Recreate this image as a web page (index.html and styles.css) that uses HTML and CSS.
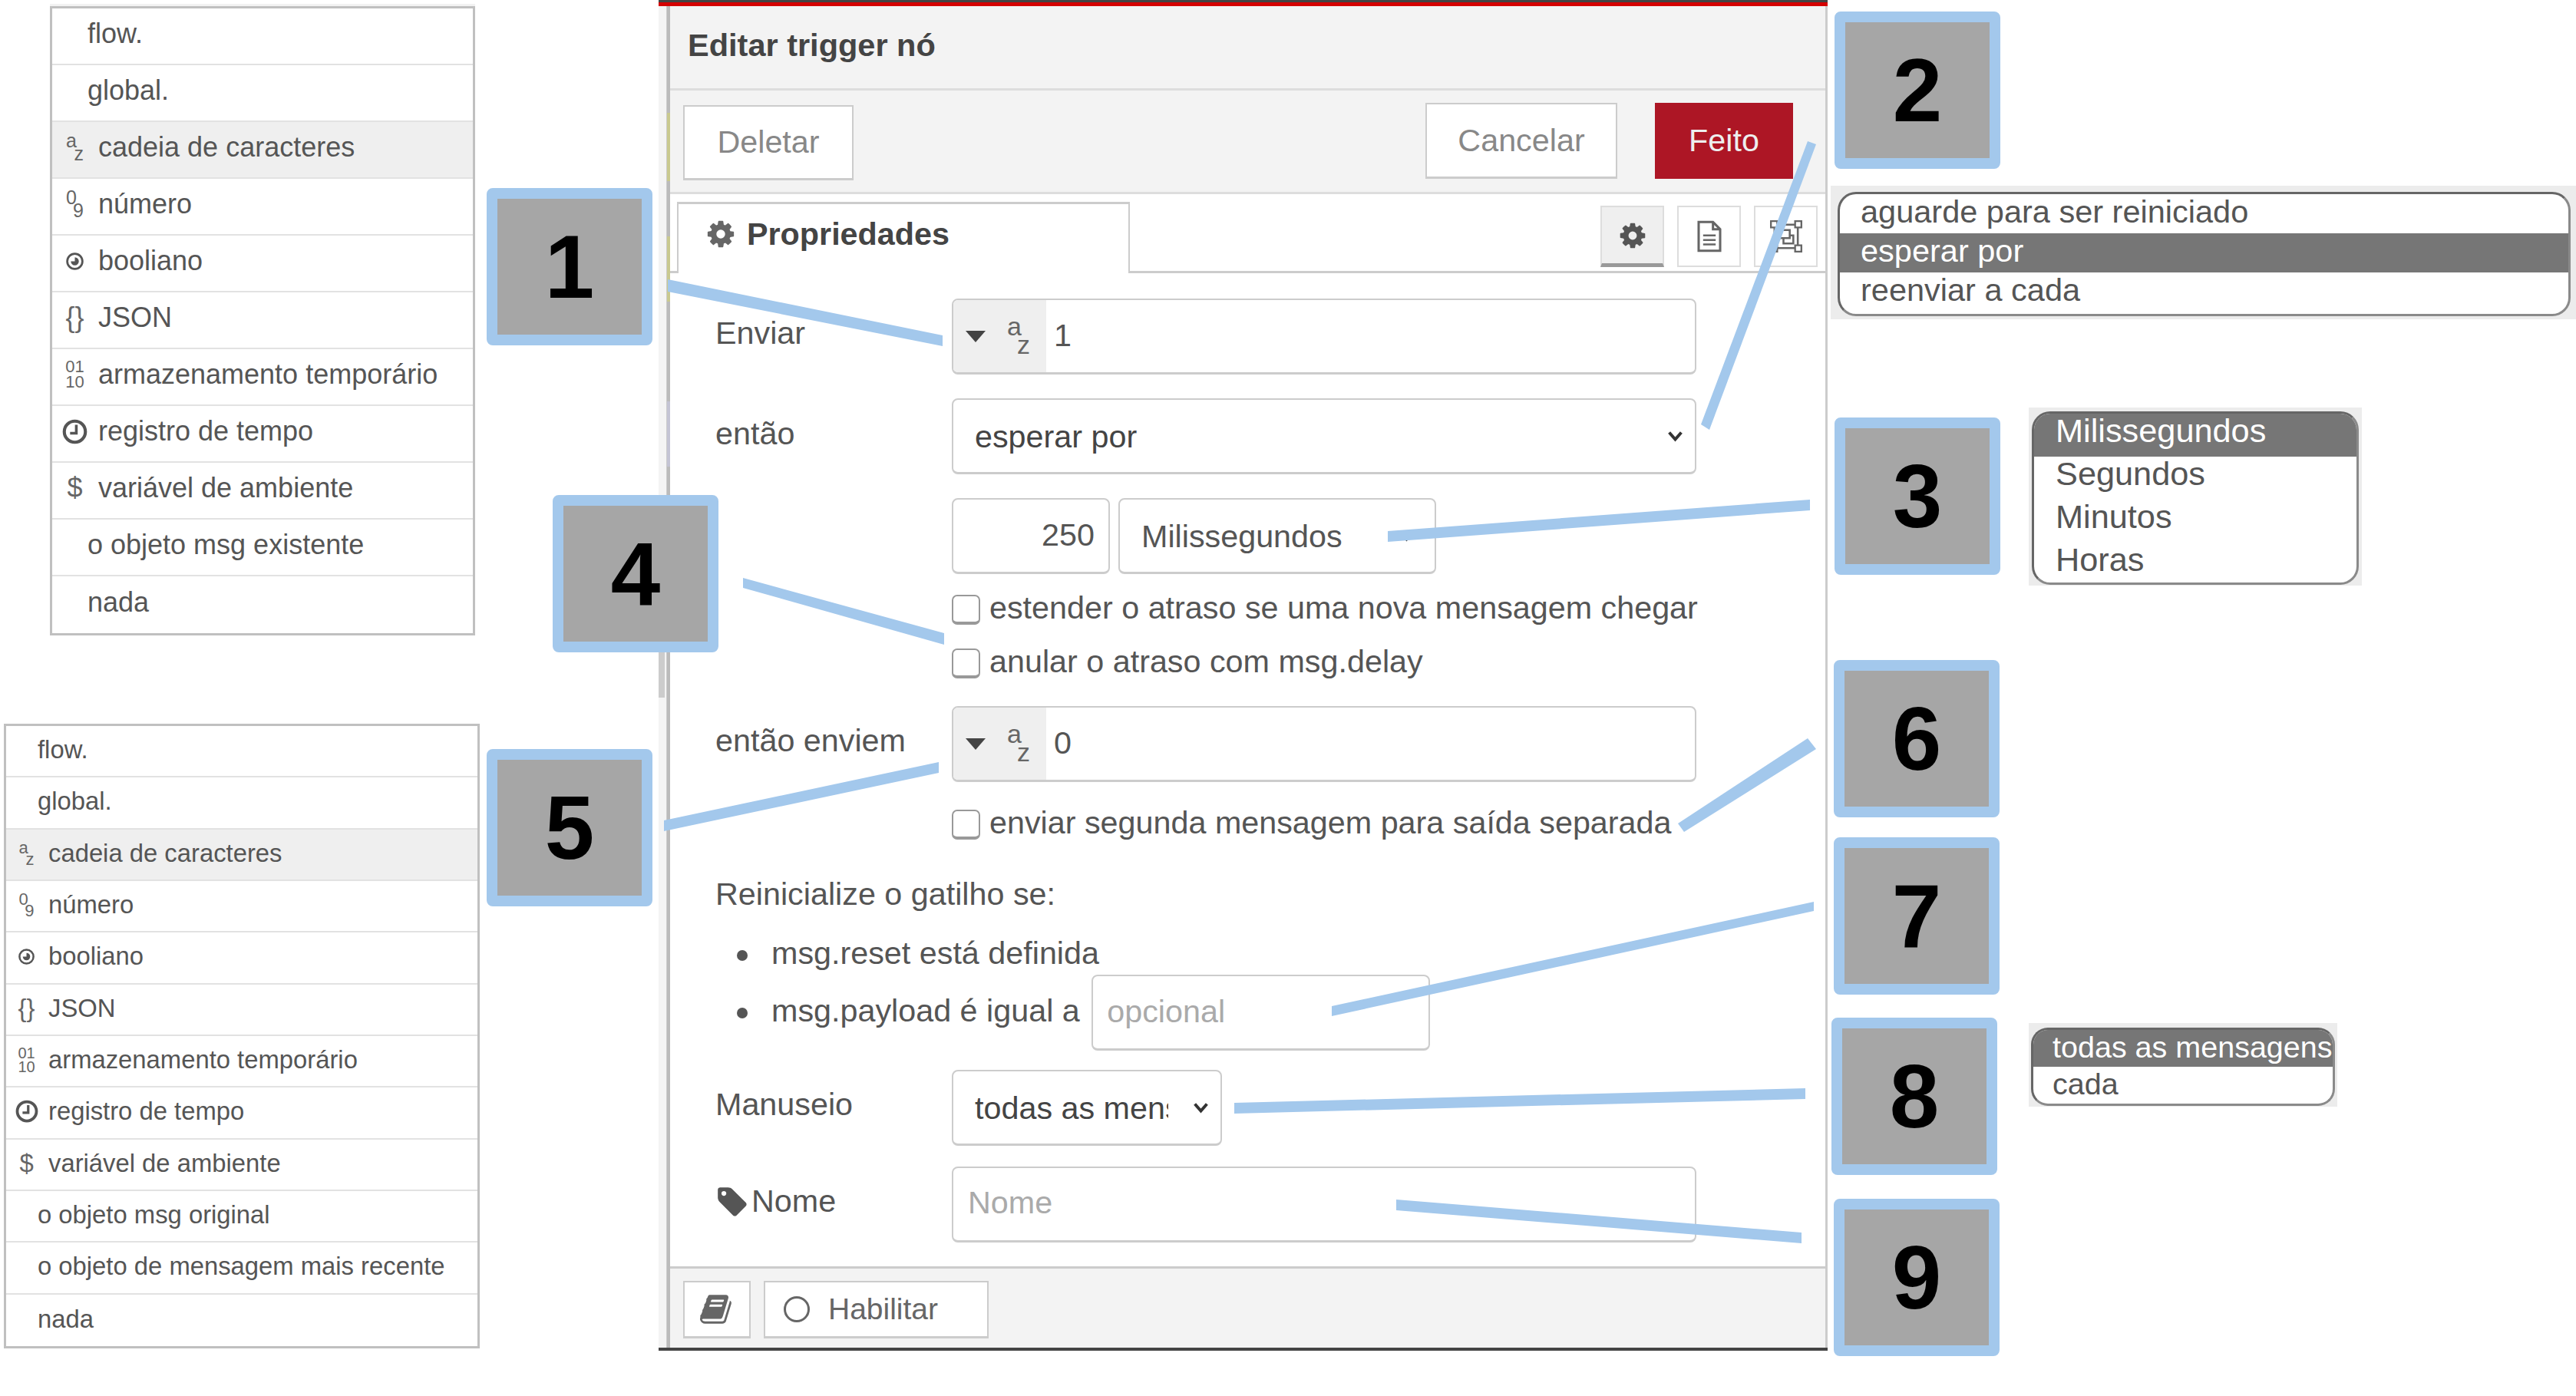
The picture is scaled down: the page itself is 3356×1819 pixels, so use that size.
FILE: index.html
```html
<!DOCTYPE html>
<html lang="pt">
<head>
<meta charset="utf-8">
<title>Editar trigger nó</title>
<link rel="stylesheet" href="styles.css">
</head>
<body>
<main class="canvas">

  <ul class="menu menu-a">
    <li class="item plain">flow.</li>
    <li class="item plain">global.</li>
    <li class="item active"><span class="ti"><span class="ti-az"><span class="ti-up">a</span><span class="ti-dn">z</span></span></span>cadeia de caracteres</li>
    <li class="item"><span class="ti"><span class="ti-az"><span class="ti-up">0</span><span class="ti-dn">9</span></span></span>número</li>
    <li class="item"><span class="ti"><svg class="ico-bool" viewBox="0 0 24 24"><circle cx="12" cy="12" r="9.5" fill="none" stroke="#555" stroke-width="2.6"/><path d="M12 7a5 5 0 1 1-5 5l5 0z" fill="#555"/></svg></span>booliano</li>
    <li class="item"><span class="ti ti-big">{}</span>JSON</li>
    <li class="item"><span class="ti"><span class="ti-bin">01<br>10</span></span>armazenamento temporário</li>
    <li class="item"><span class="ti"><svg class="ico-clock" viewBox="0 0 24 24"><circle cx="12" cy="12" r="10" fill="none" stroke="#555" stroke-width="3"/><path d="M13.4 5.5v8H7.5" fill="none" stroke="#555" stroke-width="2.6"/></svg></span>registro de tempo</li>
    <li class="item"><span class="ti ti-big">$</span>variável de ambiente</li>
    <li class="item plain">o objeto msg existente</li>
    <li class="item plain">nada</li>
  </ul>

  <ul class="menu menu-b">
    <li class="item plain">flow.</li>
    <li class="item plain">global.</li>
    <li class="item active"><span class="ti"><span class="ti-az"><span class="ti-up">a</span><span class="ti-dn">z</span></span></span>cadeia de caracteres</li>
    <li class="item"><span class="ti"><span class="ti-az"><span class="ti-up">0</span><span class="ti-dn">9</span></span></span>número</li>
    <li class="item"><span class="ti"><svg class="ico-bool" viewBox="0 0 24 24"><circle cx="12" cy="12" r="9.5" fill="none" stroke="#555" stroke-width="2.6"/><path d="M12 7a5 5 0 1 1-5 5l5 0z" fill="#555"/></svg></span>booliano</li>
    <li class="item"><span class="ti ti-big">{}</span>JSON</li>
    <li class="item"><span class="ti"><span class="ti-bin">01<br>10</span></span>armazenamento temporário</li>
    <li class="item"><span class="ti"><svg class="ico-clock" viewBox="0 0 24 24"><circle cx="12" cy="12" r="10" fill="none" stroke="#555" stroke-width="3"/><path d="M13.4 5.5v8H7.5" fill="none" stroke="#555" stroke-width="2.6"/></svg></span>registro de tempo</li>
    <li class="item"><span class="ti ti-big">$</span>variável de ambiente</li>
    <li class="item plain">o objeto msg original</li>
    <li class="item plain">o objeto de mensagem mais recente</li>
    <li class="item plain">nada</li>
  </ul>

  <section class="editor">
    <div class="editor-top"></div>
    <div class="editor-body">
      <header class="title">Editar trigger nó</header>
      <div class="toolbar">
        <button class="btn btn-delete">Deletar</button>
        <div class="toolbar-right">
          <button class="btn btn-cancel">Cancelar</button>
          <button class="btn btn-done">Feito</button>
        </div>
      </div>
      <div class="tabs">
        <div class="tab">
          <svg class="ico-cog-tab" viewBox="0 0 1792 1792"><path d="M1152 896q0-106-75-181t-181-75-181 75-75 181 75 181 181 75 181-75 75-181zm512-109v222q0 12-8 23t-20 13l-185 28q-19 54-39 91 35 50 107 138 10 12 10 25t-9 23q-27 37-99 108t-94 71q-12 0-26-9l-138-108q-44 23-91 38-16 136-29 186-7 28-36 28h-222q-14 0-24.5-8.5t-11.5-21.5l-28-184q-49-16-90-37l-141 107q-10 9-25 9-14 0-25-11-126-114-165-168-7-10-7-23 0-12 8-23 15-21 51-66.5t54-70.5q-27-50-41-99l-183-27q-13-2-21-12.5t-8-23.5v-222q0-12 8-23t19-13l186-28q14-46 39-92-40-57-107-138-10-12-10-24 0-10 9-23 26-36 98.5-107.5t94.5-71.5q13 0 26 10l138 107q44-23 91-38 16-136 29-186 7-28 36-28h222q14 0 24.5 8.5t11.5 21.5l28 184q49 16 90 37l142-107q9-9 24-9 13 0 25 10 129 119 165 170 7 8 7 22 0 12-8 23-15 21-51 66.5t-54 70.5q26 50 41 98l183 28q13 2 21 12.5t8 23.5z"/></svg>
          Propriedades
        </div>
        <div class="tab-icons">
          <button class="tab-icon on"><svg class="ico-cog" viewBox="0 0 1792 1792"><path d="M1152 896q0-106-75-181t-181-75-181 75-75 181 75 181 181 75 181-75 75-181zm512-109v222q0 12-8 23t-20 13l-185 28q-19 54-39 91 35 50 107 138 10 12 10 25t-9 23q-27 37-99 108t-94 71q-12 0-26-9l-138-108q-44 23-91 38-16 136-29 186-7 28-36 28h-222q-14 0-24.5-8.5t-11.5-21.5l-28-184q-49-16-90-37l-141 107q-10 9-25 9-14 0-25-11-126-114-165-168-7-10-7-23 0-12 8-23 15-21 51-66.5t54-70.5q-27-50-41-99l-183-27q-13-2-21-12.5t-8-23.5v-222q0-12 8-23t19-13l186-28q14-46 39-92-40-57-107-138-10-12-10-24 0-10 9-23 26-36 98.5-107.5t94.5-71.5q13 0 26 10l138 107q44-23 91-38 16-136 29-186 7-28 36-28h222q14 0 24.5 8.5t11.5 21.5l28 184q49 16 90 37l142-107q9-9 24-9 13 0 25 10 129 119 165 170 7 8 7 22 0 12-8 23-15 21-51 66.5t-54 70.5q26 50 41 98l183 28q13 2 21 12.5t8 23.5z"/></svg></button>
          <button class="tab-icon"><svg class="ico-file" viewBox="0 0 28 36"><path d="M2 2h16l8 8v24H2z M18 2v8h8" fill="none" stroke="#666" stroke-width="2.6"/><path d="M7 17h14M7 22h14M7 27h14" stroke="#666" stroke-width="2.2"/></svg></button>
          <button class="tab-icon"><svg class="ico-group" viewBox="0 0 36 36"><path d="M5 5h26v26H5z" fill="none" stroke="#666" stroke-width="2.2"/><path d="M11 11h11v9H11z M15 20v6h11v-9h-4" fill="none" stroke="#666" stroke-width="2.2"/><path d="M1 1h7v7H1zM28 1h7v7h-7zM1 28h7v7H1zM28 28h7v7h-7z" fill="#fff" stroke="#666" stroke-width="2"/></svg></button>
        </div>
      </div>

      <form class="form">
        <div class="row row-first">
          <label class="label">Enviar</label>
          <div class="typed">
            <span class="typed-btn"><i class="caret"></i><span class="typed-az"><span class="ti-up">a</span><span class="ti-dn">z</span></span></span>
            <input class="typed-input" type="text" value="1">
          </div>
        </div>
        <div class="row">
          <label class="label label-then">então</label>
          <div class="select select-wide"><span class="select-text">esperar por</span><svg class="chev" viewBox="0 0 16 12"><path d="M2 2.5l6 7 6-7" fill="none" stroke="#333" stroke-width="3"/></svg></div>
        </div>
        <div class="row row-indent">
          <input class="field field-num" type="text" value="250">
          <div class="select select-unit"><span class="select-text">Milissegundos</span><svg class="chev chev-unit" viewBox="0 0 16 12"><path d="M2 2.5l6 7 6-7" fill="none" stroke="#333" stroke-width="3"/></svg></div>
        </div>
        <label class="check check-1"><input class="box" type="checkbox">estender o atraso se uma nova mensagem chegar</label>
        <label class="check check-2"><input class="box" type="checkbox">anular o atraso com msg.delay</label>
        <div class="row row-send">
          <label class="label">então enviem</label>
          <div class="typed">
            <span class="typed-btn"><i class="caret"></i><span class="typed-az"><span class="ti-up">a</span><span class="ti-dn">z</span></span></span>
            <input class="typed-input" type="text" value="0">
          </div>
        </div>
        <label class="check check-3"><input class="box" type="checkbox">enviar segunda mensagem para saída separada</label>
        <p class="reset-title">Reinicialize o gatilho se:</p>
        <ul class="reset-list">
          <li class="reset-item">msg.reset está definida</li>
          <li class="reset-item reset-item-input">msg.payload é igual a <input class="field field-opt" type="text" placeholder="opcional"></li>
        </ul>
        <div class="row row-handle">
          <label class="label">Manuseio</label>
          <div class="select select-short"><span class="select-text select-clip">todas as mensagens</span><svg class="chev" viewBox="0 0 16 12"><path d="M2 2.5l6 7 6-7" fill="none" stroke="#333" stroke-width="3"/></svg></div>
        </div>
        <div class="row">
          <label class="label label-name"><svg class="ico-tag" viewBox="0 0 1700 1700"><path d="M576 448q0-53-37.5-90.5t-90.5-37.5-90.5 37.5-37.5 90.5 37.5 90.5 90.5 37.5 90.5-37.5 37.5-90.5zm1067 576q0 53-37 90l-491 492q-39 37-91 37-53 0-90-37l-715-716q-38-37-64.5-101t-26.5-117v-416q0-52 38-90t90-38h416q53 0 117 26.5t102 64.5l715 714q37 39 37 91z"/></svg>Nome</label>
          <input class="field field-name" type="text" placeholder="Nome">
        </div>
      </form>

      <footer class="footer">
        <button class="btn btn-book"><svg class="ico-book" viewBox="0 0 1792 1792"><path d="M1639 478q40 57 18 129l-275 906q-19 64-76.5 107.5t-122.5 43.5h-923q-77 0-148.5-53.5t-99.5-131.5q-24-67-2-127 0-4 3-27t4-37q1-8-3-21.5t-3-19.5q2-11 8-21t16.5-23.5 16.5-23.5q23-38 45-91.5t30-91.5q3-10 .5-30t-.5-28q3-11 17-28t17-23q21-36 42-92t25-90q1-9-2.5-32t.5-28q4-13 22-30.5t22-22.5q19-26 42.5-84.5t27.5-96.5q1-8-3-25.5t-2-26.5q2-8 9-18t18-23 17-21q8-12 16.5-30.5t15-35 16-36 19.5-32 26.5-23.5 36-11.5 47.5 5.5l-1 3q38-9 51-9h761q74 0 114 56t18 130l-274 906q-36 119-71.5 153.5t-128.5 34.5h-869q-27 0-38 15-11 16-1 43 24 70 144 70h923q29 0 56-15.5t35-41.5l300-987q7-22 5-57 38 15 59 43zm-1064 2q-4 13 2 22.5t20 9.5h608q13 0 25.5-9.5t16.5-22.5l21-64q4-13-2-22.5t-20-9.5h-608q-13 0-25.5 9.5t-16.5 22.5zm-83 256q-4 13 2 22.5t20 9.5h608q13 0 25.5-9.5t16.5-22.5l21-64q4-13-2-22.5t-20-9.5h-608q-13 0-25.5 9.5t-16.5 22.5z"/></svg></button>
        <button class="btn btn-enable"><i class="ring"></i>Habilitar</button>
      </footer>
    </div>
    <div class="editor-bottom"></div>
  </section>

  <div class="callout c1">1</div>
  <div class="callout c2">2</div>
  <div class="callout c3">3</div>
  <div class="callout c4">4</div>
  <div class="callout c5">5</div>
  <div class="callout c6">6</div>
  <div class="callout c7">7</div>
  <div class="callout c8">8</div>
  <div class="callout c9">9</div>

  <div class="drop drop-2">
    <ul class="drop-list">
      <li class="drop-item">aguarde para ser reiniciado</li>
      <li class="drop-item sel">esperar por</li>
      <li class="drop-item">reenviar a cada</li>
    </ul>
  </div>
  <div class="drop drop-3">
    <ul class="drop-list">
      <li class="drop-item sel">Milissegundos</li>
      <li class="drop-item">Segundos</li>
      <li class="drop-item">Minutos</li>
      <li class="drop-item">Horas</li>
    </ul>
  </div>
  <div class="drop drop-8">
    <ul class="drop-list">
      <li class="drop-item sel">todas as mensagens</li>
      <li class="drop-item">cada</li>
    </ul>
  </div>

  <svg class="leaders" viewBox="0 0 3356 1819" width="3356" height="1819">
    <polygon points="870,364 1228,437 1228,451 870,380"/>
    <polygon points="2355,184 2366,188 2227,560 2216,553"/>
    <polygon points="1808,692 2358,651 2358,665 1808,706"/>
    <polygon points="968,753 1230,825 1230,840 968,766"/>
    <polygon points="865,1069 1223,993 1223,1007 865,1083"/>
    <polygon points="2355,962 2366,976 2194,1084 2186,1073"/>
    <polygon points="1735,1311 2363,1175 2363,1187 1735,1324"/>
    <polygon points="1608,1437 2352,1418 2352,1432 1608,1451"/>
    <polygon points="1819,1563 2347,1606 2347,1620 1819,1577"/>
  </svg>
</main>
</body>
</html>
```
FILE: styles.css
```css
* { box-sizing: border-box; }
html, body { margin: 0; padding: 0; background: #fff; }
body { font-family: "Liberation Sans", Arial, sans-serif; color: #555; }
ul { list-style: none; margin: 0; padding: 0; }
button, input { font-family: inherit; color: inherit; margin: 0; }

.canvas { position: relative; width: 3356px; height: 1819px; overflow: hidden; background: #fff; }

/* type menus */
.menu { position: absolute; display: grid; grid-auto-rows: 1fr; background: #fff; border: 3px solid #c0c0c0; }
.menu-a { left: 65px; top: 8px; width: 554px; height: 820px; font-size: 36px; box-shadow: 0 -3px 0 #f2f2f2; }
.menu-b { left: 5px; top: 943px; width: 620px; height: 814px; font-size: 32.8px; }
.item { display: flex; align-items: center; border-bottom: 2px solid #e2e2e2; white-space: nowrap; padding-bottom: 6px; }
.item:last-child { border-bottom: 0; }
.item.active { background: #efefef; }
.menu-a .item { padding-left: 6px; }
.menu-a .item.plain { padding-left: 46px; }
.menu-b .item { padding-left: 4px; padding-bottom: 3px; }
.menu-b .item.plain { padding-left: 41px; }
.ti { display: flex; justify-content: center; align-items: center; flex: none; color: #666; }
.menu-a .ti { width: 47px; margin-right: 7px; }
.menu-b .ti { width: 45px; margin-right: 6px; }
.ti-big { font-size: 1em; }
.ti-az { display: flex; flex-direction: column; width: 23px; font-size: 25px; line-height: 17px; }
.menu-b .ti-az { font-size: 22px; line-height: 15px; width: 20px; }
.ti-up { align-self: flex-start; }
.ti-dn { align-self: flex-end; }
.ti-bin { font-size: 22px; line-height: 20px; text-align: center; }
.menu-b .ti-bin { font-size: 20px; line-height: 18px; }
.ico-bool { width: 25px; height: 25px; display: block; }
.menu-b .ico-bool { width: 23px; height: 23px; }
.ico-clock { width: 33px; height: 33px; display: block; }
.menu-b .ico-clock { width: 30px; height: 30px; }

/* editor */
.editor { position: absolute; left: 858px; top: 0; width: 1523px; height: 1760px; display: flex; flex-direction: column; background: #f4f4f4; }
.editor::before { content: ""; position: absolute; left: 0; top: 848px; width: 8px; height: 61px; background: #ccc; }
.editor::after { content: ""; position: absolute; left: 11px; top: 8px; width: 4px; height: 1748px; background: linear-gradient(#bbb 0 139px, #c9c98f 139px 228px, #bbb 228px 300px, #c9c98f 300px 385px, #bbb 385px 515px, #c4c4d4 515px 600px, #bbb 600px); }
.editor-top { height: 8px; flex: none; background: #d40000; border-top: 3px solid #444; }
.editor-bottom { height: 4px; flex: none; background: #444; }
.editor-body { flex: 1; margin-left: 10px; border-left: 3px solid #ccc; border-right: 3px solid #ccc; display: flex; flex-direction: column; font-size: 41.3px; }
.title { height: 110px; flex: none; background: #f3f3f3; border-bottom: 3px solid #ddd; padding-left: 25px; display: flex; align-items: center; font-weight: 700; font-size: 41.5px; color: #444; padding-bottom: 6px; }
.toolbar { height: 135px; flex: none; background: #f3f3f3; border-bottom: 3px solid #ddd; display: flex; justify-content: space-between; padding: 19px 42px 0 19px; }
.toolbar-right { display: flex; gap: 49px; margin-top: -3px; }
.btn { background: #fff; border: 2px solid #ccc; border-bottom-width: 3px; font-size: 41.3px; color: #888; padding: 0; cursor: pointer; }
.btn-delete { width: 222px; height: 98px; }
.btn-cancel { width: 250px; height: 99px; }
.btn-done { width: 180px; height: 99px; background: #ad1625; border-color: #ad1625; color: #eee; }

.tabs { height: 103px; flex: none; background: #fff; display: flex; justify-content: space-between; padding: 10px 10px 0 11px; border-bottom: 3px solid #ccc; }
.tab { width: 590px; height: 93px; background: #fff; border: 2px solid #ccc; border-top-width: 3px; border-bottom: 0; display: flex; align-items: center; gap: 14px; padding: 0 0 12px 35px; font-weight: 700; color: #444; font-size: 41.3px; }
.ico-cog-tab { width: 40px; height: 40px; fill: #666; flex: none; }
.tab-icons { display: flex; gap: 17px; padding-top: 5px; }
.tab-icon { width: 83px; height: 80px; background: #fff; border: 2px solid #ddd; display: flex; align-items: center; justify-content: center; padding: 0; }
.tab-icon.on { background: #efefef; border-bottom: 5px solid #999; }
.ico-cog { width: 38px; height: 38px; fill: #555; }
.ico-file { width: 34px; height: 42px; }
.ico-group { width: 46px; height: 42px; }

/* form */
.form { flex: 1; background: #fff; padding: 33px 0 0 61px; display: flex; flex-direction: column; }
.row { display: flex; align-items: center; margin-top: 31px; height: 99px; flex: none; }
.row-first { margin-top: 0; }
.row-indent { margin-left: 308px; gap: 11px; }
.label { width: 308px; flex: none; padding-bottom: 8px; display: flex; align-items: center; }
.label-then { padding-bottom: 6px; }
.ico-tag { width: 42px; height: 42px; fill: #555; flex: none; margin-right: 5px; }
.typed { width: 970px; height: 99px; display: flex; border: 2px solid #ccc; border-bottom-width: 3px; border-radius: 8px; overflow: hidden; background: #fff; }
.typed-btn { width: 121px; flex: none; background: #efefef; display: flex; align-items: center; gap: 28px; padding-left: 16px; }
.caret { width: 0; height: 0; border-style: solid; border-width: 15px 13px 0; border-color: #444 transparent transparent; flex: none; }
.typed-az { display: flex; flex-direction: column; width: 30px; font-size: 34px; line-height: 24px; color: #666; margin-top: -2px; }
.typed-input { flex: 1; min-width: 0; border: 0; outline: 0; font-size: 41.3px; padding: 0 0 2px 10px; background: transparent; }
.select { height: 99px; border: 2px solid #ccc; border-bottom-width: 3px; border-radius: 8px; background: #fff; display: flex; align-items: center; justify-content: space-between; padding-left: 28px; padding-right: 15px; color: #444; }
.select-wide { width: 970px; }
.select-unit { width: 414px; color: #555; padding-left: 28px; padding-right: 26px; }
.select-short { width: 352px; padding-right: 15px; }
.select-text { white-space: nowrap; padding-top: 2px; }
.select-clip { width: 252px; overflow: hidden; }
.chev { width: 21px; height: 16px; flex: none; }
.field { height: 99px; border: 2px solid #ccc; border-bottom-width: 3px; border-radius: 8px; background: #fff; font-size: 41.3px; outline: 0; padding: 0 18px 2px; flex: none; }
.field::placeholder { color: #aaa; opacity: 1; }
.field-num { width: 206px; text-align: right; color: #555; }
.field-opt { width: 441px; height: 99px; margin-left: 4px; }
.field-name { width: 970px; padding-left: 19px; }

.check { display: flex; align-items: center; margin-left: 308px; white-space: nowrap; height: 39px; padding-bottom: 4px; }
.check-1 { margin-top: 27px; }
.check-2 { margin-top: 31px; }
.check-3 { margin-top: 36px; }
.row-send { margin-top: 36px; }
.box { appearance: none; -webkit-appearance: none; width: 37px; height: 39px; margin: 4px 12px 0 0; border: 2px solid #999; border-bottom-width: 4px; border-radius: 7px; background: #fff; flex: none; }
.reset-title { margin: 47px 0 0; height: 48px; line-height: 48px; }
.reset-list { padding-left: 73px; margin: 0; }
.reset-item { height: 48px; line-height: 48px; margin-top: 29px; white-space: nowrap; color: #555; }
.reset-item::before { content: ""; display: inline-block; width: 14px; height: 14px; margin: 0 31px 0 -45px; border-radius: 50%; background: #555; vertical-align: middle; }
.reset-item-input { height: 99px; line-height: 95px; margin-top: 4px; }
.reset-item-input .field { vertical-align: top; }
.row-handle { margin-top: 25px; }
.row-handle + .row { margin-top: 26px; height: 100px; }

.footer { height: 106px; flex: none; background: #f3f3f3; border-top: 3px solid #ccc; display: flex; gap: 17px; padding: 16px 0 0 19px; }
.btn-book { width: 88px; height: 75px; display: flex; align-items: center; justify-content: center; }
.ico-book { width: 44px; height: 44px; fill: #666; }
.btn-enable { width: 293px; height: 75px; display: flex; align-items: center; gap: 24px; padding-left: 24px; color: #666; font-size: 39px; }
.ring { width: 34px; height: 34px; border: 3px solid #666; border-radius: 50%; flex: none; }

/* numbered callouts */
.callout { position: absolute; width: 216px; height: 205px; display: grid; place-items: center; background: #a6a6a6; background-clip: padding-box; border: 14px solid #a3c8ec; border-radius: 8px; color: #000; font-weight: 700; font-size: 116px; line-height: 1; z-index: 3; }
.c1 { left: 634px; top: 245px; }
.c2 { left: 2390px; top: 15px; }
.c3 { left: 2390px; top: 544px; }
.c4 { left: 720px; top: 645px; }
.c5 { left: 634px; top: 976px; }
.c6 { left: 2389px; top: 860px; }
.c7 { left: 2389px; top: 1091px; }
.c8 { left: 2386px; top: 1326px; }
.c9 { left: 2389px; top: 1562px; }

/* option popups */
.drop { position: absolute; background: #ececec; z-index: 2; }
.drop-list { height: 100%; background: #fff; border: 3px solid #8a8a8a; border-top-color: #666; border-left-color: #666; overflow: hidden; color: #555; }
.drop-item { white-space: nowrap; }
.sel { background: #767676; color: #fff; }
.drop-2 { left: 2385px; top: 242px; width: 971px; height: 174px; padding: 8px 7px 4px 9px; font-size: 41.5px; }
.drop-2 .drop-list { border-radius: 24px; }
.drop-2 .drop-item { height: 51px; line-height: 45px; padding-left: 27px; }
.drop-3 { left: 2643px; top: 531px; width: 434px; height: 232px; padding: 5px 4px 1px 4px; font-size: 43.3px; }
.drop-3 .drop-list { border-radius: 24px; }
.drop-3 .drop-item { height: 56px; line-height: 45px; padding-left: 28px; }
.drop-8 { left: 2643px; top: 1333px; width: 402px; height: 109px; padding: 6px 3px 1px 3px; font-size: 39.5px; }
.drop-8 .drop-list { border-radius: 22px; }
.drop-8 .drop-item { height: 48px; line-height: 44px; padding-left: 25px; }

.leaders { position: absolute; left: 0; top: 0; z-index: 4; pointer-events: none; }
.leaders polygon { fill: #a3c8ec; }
```
